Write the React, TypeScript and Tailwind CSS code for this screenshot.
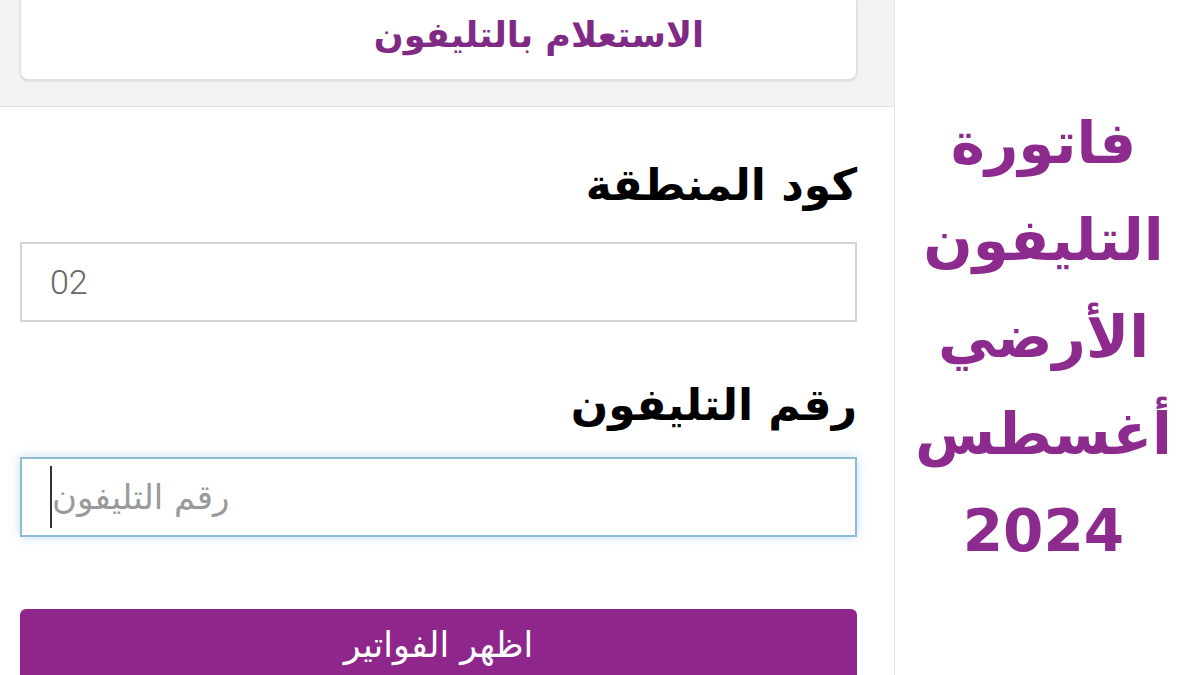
import React from 'react';

const arabic = { fontFamily: '"DejaVu Sans", "Noto Sans", sans-serif' };

const App: React.FC = () => {
  return (
    <div className="w-[1200px] h-[675px] flex overflow-hidden bg-white" style={arabic}>
      {/* phone screenshot */}
      <div className="w-[895px] h-full flex flex-col border-r border-[#e3e3e3] shrink-0">
        <div className="h-[107px] bg-[#f3f3f3] border-b border-[#e1e1e1] pl-[20px] pr-[37px] shrink-0">
          <div className="h-[80px] bg-white border-x border-b border-[#dedede] rounded-b-lg shadow-sm flex items-center justify-end pr-[152px] pb-[8px]">
            <span dir="rtl" className="text-[35px] font-bold text-[#7f2a84]">الاستعلام بالتليفون</span>
          </div>
        </div>

        <div className="flex flex-col pl-[20px] pr-[37px]">
          <label dir="rtl" className="mt-[53px] h-[50px] leading-[50px] text-[44px] font-bold text-black text-right">
            كود المنطقة
          </label>
          <div className="mt-[32px] h-[80px] border-2 border-[#d4d4d4] flex items-center px-[28px]">
            <span className="text-[34px] font-light text-[#666]" style={{ fontFamily: 'Roboto, "Liberation Sans", sans-serif' }}>02</span>
          </div>

          <label dir="rtl" className="mt-[58px] h-[50px] leading-[50px] text-[44px] font-bold text-black text-right">
            رقم التليفون
          </label>
          <div className="mt-[27px] h-[80px] border-2 border-[#8fbcd4] shadow-[0_0_10px_rgba(120,180,230,0.45)] flex items-center pl-[28px]">
            <span className="w-[2px] h-[62px] bg-[#333] shrink-0" />
            <span dir="rtl" className="text-[34px] text-[#9a9a9a]">رقم التليفون</span>
          </div>

          <button className="mt-[72px] h-[72px] w-full bg-[#8e268b] rounded-md flex items-start justify-center pt-[10px]">
            <span dir="rtl" className="text-[35px] text-white">اظهر الفواتير</span>
          </button>
        </div>
      </div>

      {/* title */}
      <div className="flex-1 flex items-center justify-center pr-[8px]">
        <div dir="rtl" className="text-center text-[58px] leading-[97px] font-bold text-[#8d2a8e]">
          <div>فاتورة</div>
          <div>التليفون</div>
          <div>الأرضي</div>
          <div>أغسطس</div>
          <div>2024</div>
        </div>
      </div>
    </div>
  );
};

export default App;
